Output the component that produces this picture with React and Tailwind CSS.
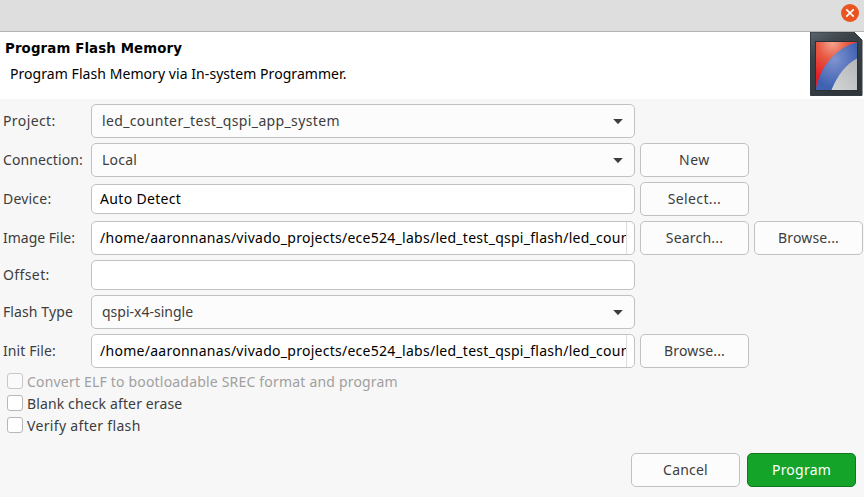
const PATH = '/home/aaronnanas/vivado_projects/ece524_labs/led_test_qspi_flash/led_coun';

function Label({ children, className = '' }) {
  return <span className={`-mr-[2px] w-[88px] shrink-0 whitespace-nowrap pl-[3px] ${className}`}>{children}</span>;
}

function Select({ value, className = '' }) {
  return (
    <div className="flex h-[34px] w-[544px] shrink-0 items-center justify-between rounded-[5px] border border-[#c1c1c1] bg-[#fcfcfc] pl-[10px] pr-[11px]">
      <span className={className}>{value}</span>
      <svg width="10" height="5" viewBox="0 0 10 5" className="mt-px">
        <path d="M0.2 0h9.6L5.6 4.6Q5 5.2 4.4 4.6Z" fill="#3d3d3d" />
      </svg>
    </div>
  );
}

function Field({ value = '' }) {
  return (
    <div className="flex h-[30px] w-[544px] shrink-0 items-center rounded-[5px] border border-[#c1c1c1] bg-white pl-2 tracking-[0.33px] text-black">
      {value}
    </div>
  );
}

function PathField() {
  return (
    <div className="flex h-[34px] w-[544px] shrink-0 rounded-[5px] border border-[#c1c1c1] bg-white pl-2 pr-[7px] text-black">
      <div className="flex min-w-0 flex-1 items-center overflow-hidden whitespace-nowrap border-r border-[#dcdcdc] tracking-[0.27px]">
        {PATH}
      </div>
    </div>
  );
}

function Button({ children, primary = false, className = '' }) {
  const look = primary
    ? 'border-[#0f7a1d] bg-[#15a42a] text-white'
    : 'border-[#c1c1c1] bg-[#fcfcfc]';
  return (
    <button className={`h-[34px] w-[109px] shrink-0 rounded-[5px] border ${look} ${className}`}>
      {children}
    </button>
  );
}

function Row({ children }) {
  return <div className="flex items-center gap-[5px]">{children}</div>;
}

function Check({ children, disabled = false, className = '' }) {
  return (
    <label className={`flex h-[22px] items-center gap-1 pl-[7px] ${disabled ? 'text-[#a0a0a0]' : ''} ${className}`}>
      <span className={`size-4 rounded-[3px] border ${disabled ? 'border-[#c8c8c8] bg-[#fafafa]' : 'border-[#b8b8b8] bg-white'}`} />
      <span className="pt-[2px]">{children}</span>
    </label>
  );
}

function Logo() {
  return (
    <svg width="53" height="64" viewBox="0 0 53 64">
      <defs>
        <linearGradient id="frame" x1="0" y1="0" x2="0.5" y2="1">
          <stop offset="0" stopColor="#5b636b" />
          <stop offset="0.35" stopColor="#3b4349" />
          <stop offset="1" stopColor="#30373c" />
        </linearGradient>
        <radialGradient id="red" cx="0.4" cy="0" r="0.8">
          <stop offset="0" stopColor="#f4a793" />
          <stop offset="0.45" stopColor="#e95a43" />
          <stop offset="1" stopColor="#e01f26" />
        </radialGradient>
        <radialGradient id="blue" cx="0.45" cy="0.35" r="0.6">
          <stop offset="0" stopColor="#8093cf" />
          <stop offset="1" stopColor="#3f62b2" />
        </radialGradient>
        <linearGradient id="gray" x1="0" y1="1" x2="1" y2="0">
          <stop offset="0" stopColor="#d4d5d6" />
          <stop offset="1" stopColor="#b3b6b8" />
        </linearGradient>
      </defs>
      <path d="M0.500 0H44L52 8V63.500H0.500Z" fill="url(#frame)" stroke="#343b41" strokeWidth="1" />
      <path d="M5 9H48V59H5Z" fill="#2a3035" />
      <path d="M6 10H47V58H6Z" fill="url(#red)" />
      <path d="M47 10.500C27 15 11 33 6 56V58H47Z" fill="url(#blue)" />
      <path d="M47 26.500C36 32 27 44 21.500 58H47Z" fill="url(#gray)" />
    </svg>
  );
}

export default function App() {
  return (
    <div className="flex h-[497px] w-[864px] flex-col overflow-hidden bg-[#f7f7f7] font-['Noto_Sans',sans-serif] text-[14px] leading-5 text-[#3d3d3d]">
      <div className="flex h-8 shrink-0 justify-end border-b border-[#b4b4b4] bg-[#dedede] pr-[5px] pt-1">
        <button className="flex size-[18px] items-center justify-center rounded-full bg-[#e95420]" aria-label="Close">
          <svg width="10" height="10" viewBox="0 0 10 10">
            <path d="M1.300 1.300L8.700 8.700M8.700 1.300L1.300 8.700" stroke="#fff" strokeWidth="1.700" />
          </svg>
        </button>
      </div>

      <div className="flex h-[67px] shrink-0 justify-between bg-white pr-px text-black">
        <div className="flex flex-col gap-[5px] pl-[5px] pt-[7px]">
          <h1 className="font-['DejaVu_Sans',sans-serif] text-[13.33px] font-bold tracking-[0.13px]">Program Flash Memory</h1>
          <p className="pl-[5px] tracking-[0.06px]">Program Flash Memory via In-system Programmer.</p>
        </div>
        <Logo />
      </div>

      <div className="flex flex-col gap-[5px] pt-[5px]">
        <Row>
          <Label className="tracking-[0.4px]">Project:</Label>
          <Select value="led_counter_test_qspi_app_system" className="tracking-[0.36px]" />
        </Row>
        <Row>
          <Label className="tracking-[0.1px]">Connection:</Label>
          <Select value="Local" className="tracking-[0.2px]" />
          <Button className="tracking-[0.5px]">New</Button>
        </Row>
        <Row>
          <Label className="tracking-[0.2px]">Device:</Label>
          <Field value="Auto Detect" />
          <Button className="tracking-[0.37px]">Select...</Button>
        </Row>
        <Row>
          <Label className="tracking-[0px]">Image File:</Label>
          <PathField />
          <Button className="tracking-[0.2px]">Search...</Button>
          <Button className="tracking-[0.15px]">Browse...</Button>
        </Row>
        <Row>
          <Label className="tracking-[0.4px]">Offset:</Label>
          <Field />
        </Row>
        <Row>
          <Label className="tracking-[0.1px]">Flash Type</Label>
          <Select value="qspi-x4-single" className="tracking-[0px]" />
        </Row>
        <Row>
          <Label className="tracking-[0.1px]">Init File:</Label>
          <PathField />
          <Button className="tracking-[0.15px]">Browse...</Button>
        </Row>
      </div>

      <div className="mt-[2px] flex flex-col">
        <Check disabled className="tracking-[0.19px]">Convert ELF to bootloadable SREC format and program</Check>
        <Check className="tracking-[0.13px]">Blank check after erase</Check>
        <Check className="tracking-[0.33px]">Verify after flash</Check>
      </div>

      <div className="mt-auto flex justify-end gap-[7px] pb-[10px] pr-2">
        <Button className="tracking-[0.2px]">Cancel</Button>
        <Button primary className="tracking-[0.23px]">Program</Button>
      </div>
    </div>
  );
}
